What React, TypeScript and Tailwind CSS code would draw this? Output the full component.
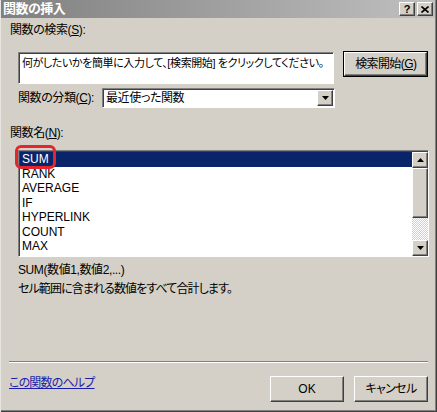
import React from "react";

const items = ["SUM", "RANK", "AVERAGE", "IF", "HYPERLINK", "COUNT", "MAX"];

const font = "font-['Liberation_Sans','Noto_Sans_CJK_JP',sans-serif] [font-feature-settings:'palt']";

function Arrow({ up }: { up?: boolean }) {
  return (
    <svg width="7" height="4" viewBox="0 0 7 4">
      {up ? <path d="M3.5 0 L7 4 L0 4 Z" fill="#000" /> : <path d="M0 0 L7 0 L3.5 4 Z" fill="#000" />}
    </svg>
  );
}

const raised =
  "bg-[#d4d0c8] border border-t-white border-l-white border-r-[#404040] border-b-[#404040] shadow-[inset_-1px_-1px_0_#808080]";

export default function App() {
  return (
    <div className={`w-[437px] h-[412px] bg-[#d4d0c8] text-black text-[12px] leading-[14px] relative flex flex-col border-l border-l-[#e8e6e0] shadow-[inset_-1px_-1px_0_#404040,inset_-2px_-2px_0_#808080] ${font}`}>
      {/* Title bar */}
      <div className="h-[18px] mr-[2px] bg-gradient-to-r from-[#808080] to-[#c0c0c0] flex items-center justify-between pl-[2px] pr-[2px]">
        <span className="text-white font-bold text-[13px] tracking-[-0.5px]">関数の挿入</span>
        <div className="flex gap-[2px] items-center">
          <div className={`${raised} w-[16px] h-[14px] flex items-center justify-center text-[11px] font-bold leading-none`}>?</div>
          <div className={`${raised} w-[16px] h-[14px] flex items-center justify-center`}>
            <svg width="8" height="7" viewBox="0 0 8 7">
              <path d="M0.5 0.5 L7.5 6.5 M7.5 0.5 L0.5 6.5" stroke="#000" strokeWidth="1.6" />
            </svg>
          </div>
        </div>
      </div>

      <div className="flex flex-col pl-[8px] pr-[9px]">
        <div className="mt-[5px] h-[14px] ml-[1px] tracking-[-0.4px]">
          関数の検索(<span className="underline">S</span>):
        </div>

        <div className="flex items-start mt-[14px]">
          <div className="ml-[9px] mt-[1px] w-[318px] h-[32px] bg-white border border-t-[#808080] border-l-[#808080] border-r-white border-b-white shadow-[inset_1px_1px_0_#404040] pl-[3px] pt-[3px] whitespace-nowrap overflow-hidden text-[11px] tracking-[-0.4px]">
            何がしたいかを簡単に入力して、[検索開始] をクリックしてください。
          </div>
          <div className="ml-[9px] w-[85px] h-[26px] border border-black">
            <div className={`${raised} w-full h-full flex items-center justify-center tracking-[-0.6px]`}>
              検索開始(<span className="underline">G</span>)
            </div>
          </div>
        </div>

        <div className="flex items-center mt-[4px] ml-[9px] h-[20px] tracking-[-0.4px]">
          <span className="w-[84px]">
            関数の分類(<span className="underline">C</span>):
          </span>
          <div className="w-[233px] h-[20px] bg-white border border-t-[#808080] border-l-[#808080] border-r-white border-b-white shadow-[inset_1px_1px_0_#404040] flex items-center justify-between pl-[3px] pr-[1px]">
            <span>最近使った関数</span>
            <div className={`${raised} w-[16px] h-[16px] flex items-center justify-center`}>
              <Arrow />
            </div>
          </div>
        </div>

        <div className="mt-[18px] h-[14px] ml-[1px] tracking-[-0.4px]">
          関数名(<span className="underline">N</span>):
        </div>

        <div className="relative mt-[10px] ml-[9px] w-[411px] h-[107px] bg-white border border-t-[#808080] border-l-[#808080] border-r-white border-b-white shadow-[inset_1px_1px_0_#404040] flex">
          <div className="flex-1 flex flex-col pt-[1px] pl-[1px]">
            {items.map((it, i) => (
              <div
                key={it}
                className={`h-[14.5px] leading-[14.5px] pl-[2px] text-[12px] ${i === 0 ? "bg-[#0a246a] text-white" : ""}`}
              >
                {it}
              </div>
            ))}
          </div>
          <div className="w-[16px] flex flex-col mt-[1px]">
            <div className={`${raised} h-[16px] flex items-center justify-center`}>
              <Arrow up />
            </div>
            <div className={`${raised} h-[50px]`} />
            <div className="flex-1 bg-[repeating-conic-gradient(#d4d0c8_0_25%,#ffffff_0_50%)] bg-[length:2px_2px]" />
            <div className={`${raised} h-[16px] flex items-center justify-center`}>
              <Arrow />
            </div>
          </div>
          <div className="absolute left-[-4px] top-[-6px] w-[41px] h-[24px] border-[3px] border-[#e3262e] rounded-[6px]" />
        </div>

        <div className="mt-[6px] ml-[9px] h-[14px] tracking-[-0.4px]">SUM(数値1,数値2,...)</div>
        <div className="mt-[5px] ml-[9px] h-[14px] tracking-[-0.9px]">セル範囲に含まれる数値をすべて合計します。</div>

        <div className="mt-[65px] h-[2px] border-t border-t-[#808080] border-b border-b-white" />

        <div className="flex items-start mt-[13px]">
          <span className="text-[#1c1caa] underline tracking-[-0.8px]">この関数のヘルプ</span>
          <div className="flex-1" />
          <div className={`${raised} w-[74px] h-[26px] flex items-center justify-center`}>OK</div>
          <div className={`${raised} ml-[10px] w-[74px] h-[26px] flex items-center justify-center tracking-[-0.6px]`}>キャンセル</div>
        </div>
      </div>
    </div>
  );
}
